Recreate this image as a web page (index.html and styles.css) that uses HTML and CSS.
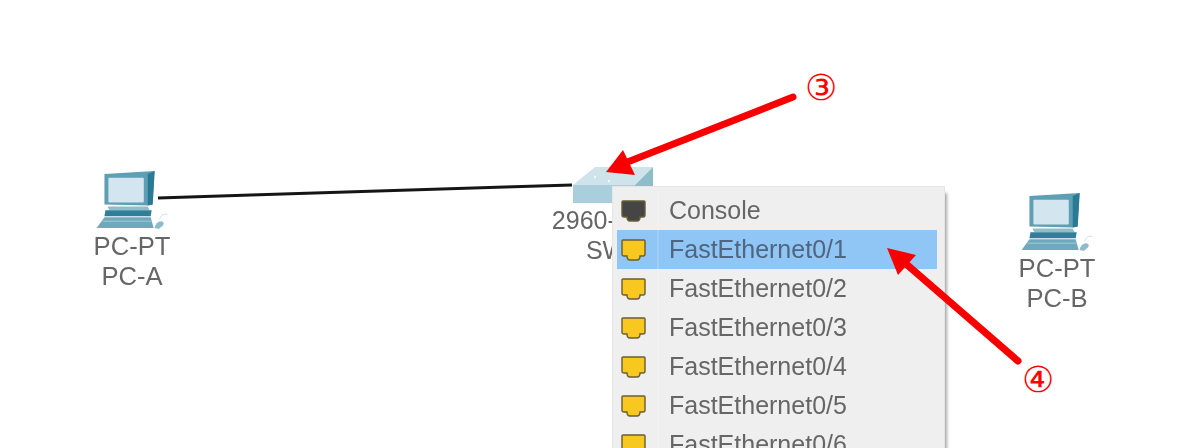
FILE: index.html
```html
<!DOCTYPE html>
<html lang="en">
<head>
    <meta charset="UTF-8">
    <meta name="viewport" content="width=device-width, initial-scale=1.0">
    <title>Packet Tracer</title>
    <link rel="stylesheet" href="styles.css">
</head>
<body>
    <svg class="defs" width="0" height="0">
        <symbol id="pc" viewBox="0 0 72 62">
            <path d="M8 4 L59 1 L57 35 L52 36 L8 35 Z" fill="#5f9fb5"/>
            <path d="M52 4 L59 1 L57 35 L52 36 Z" fill="#2a7a95"/>
            <rect x="12" y="8" width="36" height="25" rx="1" fill="#d3e5ee"/>
            <path d="M11 37 H52 L54 41 H13 Z" fill="#8fbdcc"/>
            <path d="M9 41 H56 L55 47 H8 Z" fill="#2f7f99"/>
            <path d="M8 48 H55 L58 59 H0 Z" fill="#6fa9bd"/>
            <path d="M6 52 H56" stroke="#a5cbd8" stroke-width="1"/>
            <path d="M59 59 Q60 52 66 52 Q70 53 67 57 L63 60 Z" fill="#8fbccb"/>
            <path d="M64 50 Q66 44 72 45" fill="none" stroke="#c5dde6" stroke-width="1"/>
        </symbol>
        <symbol id="port" viewBox="0 0 25 22">
            <path d="M2 1 H23 Q24 1 24 2 V15 Q24 17 22 17 H19 Q19 21 16 21 H9 Q6 21 6 17 H3 Q1 17 1 15 V2 Q1 1 2 1 Z" fill="currentColor" stroke="#6a5c34" stroke-width="1.4"/>
        </symbol>
    </svg>

    <div class="scene">
        <svg class="wires" width="1200" height="448">
            <line x1="158" y1="198" x2="572" y2="185" stroke="#151515" stroke-width="3"/>
        </svg>

        <div class="node pc-a">
            <svg class="pc-icon"><use href="#pc"/></svg>
            <div class="label">PC-PT</div>
            <div class="label">PC-A</div>
        </div>

        <div class="node sw">
            <svg class="sw-icon" viewBox="0 0 80 36">
                <path d="M0 18 L22 0 H80 L62 18 Z" fill="#cfe3ea"/>
                <rect x="0" y="18" width="62" height="18" fill="#a9cfdc"/>
                <path d="M62 18 L80 0 V20 L62 36 Z" fill="#8fbcc9"/>
                <circle cx="22" cy="10" r="1.2" fill="#f2f8fa"/>
                <circle cx="48" cy="5" r="1.2" fill="#f2f8fa"/>
                <circle cx="36" cy="14" r="1.2" fill="#f2f8fa"/>
            </svg>
            <div class="label sw-label">2960-24TT</div>
            <div class="label sw-label">SW1</div>
        </div>

        <div class="node pc-b">
            <svg class="pc-icon"><use href="#pc"/></svg>
            <div class="label">PC-PT</div>
            <div class="label">PC-B</div>
        </div>

        <ul class="menu">
            <li class="item console"><span class="cell"><svg class="port"><use href="#port"/></svg></span>Console</li>
            <li class="item active"><span class="cell"><svg class="port"><use href="#port"/></svg></span>FastEthernet0/1</li>
            <li class="item"><span class="cell"><svg class="port"><use href="#port"/></svg></span>FastEthernet0/2</li>
            <li class="item"><span class="cell"><svg class="port"><use href="#port"/></svg></span>FastEthernet0/3</li>
            <li class="item"><span class="cell"><svg class="port"><use href="#port"/></svg></span>FastEthernet0/4</li>
            <li class="item"><span class="cell"><svg class="port"><use href="#port"/></svg></span>FastEthernet0/5</li>
            <li class="item"><span class="cell"><svg class="port"><use href="#port"/></svg></span>FastEthernet0/6</li>
        </ul>
    </div>

    <svg class="notes" width="1200" height="448">
        <line x1="793" y1="97" x2="625" y2="163" stroke="#f80000" stroke-width="7" stroke-linecap="round"/>
        <polygon points="606,172 623,150 635,175" fill="#f80000"/>
        <line x1="1018" y1="361" x2="905" y2="263" stroke="#f80000" stroke-width="7" stroke-linecap="round"/>
        <polygon points="887,248 916,255 898,275" fill="#f80000"/>
    </svg>
    <div class="mark mark-3">③</div>
    <div class="mark mark-4">④</div>
</body>
</html>
```

FILE: styles.css
```css
*{
    padding: 0;
    margin: 0;
    box-sizing: border-box;
}
body{
    width: 1200px;
    height: 448px;
    overflow: hidden;
    position: relative;
    background: #fff;
    font-family: "Liberation Sans", Arial, sans-serif;
}
.defs{
    position: absolute;
}
/* the source picture is an upscaled capture, so it is a bit soft */
.scene{
    position: absolute;
    inset: 0;
    filter: blur(0.7px);
}
.wires, .notes{
    position: absolute;
    left: 0;
    top: 0;
}
.node{
    position: absolute;
    width: 160px;
    display: flex;
    flex-direction: column;
    align-items: center;
}
.pc-a{
    left: 52px;
    top: 170px;
}
.pc-b{
    left: 977px;
    top: 192px;
}
.sw{
    left: 533px;
    top: 167px;
}
.pc-icon{
    width: 72px;
    height: 61px;
}
.sw-icon{
    width: 80px;
    height: 36px;
    margin-bottom: 2px;
}
.label{
    font-size: 25.6px;
    line-height: 30px;
    color: #666;
    white-space: nowrap;
}
.sw-label{
    font-size: 25px;
}
.menu{
    position: absolute;
    left: 612px;
    top: 186px;
    width: 333px;
    padding: 4px 7px 0 4px;
    list-style: none;
    background: #efefef;
    border: 1px solid #e6e6e6;
    box-shadow: 3px 6px 3px -1px #a8a8a8;
}
.item{
    height: 39px;
    display: flex;
    align-items: center;
    font-size: 25px;
    color: #666;
    white-space: nowrap;
}
.item.active{
    background: #90c6f5;
    color: #4f6580;
}
.cell{
    width: 42px;
    height: 100%;
    margin-right: 10px;
    padding-left: 4px;
    display: flex;
    align-items: center;
    border-right: 2px solid rgba(255, 255, 255, 0.15);
}
.port{
    width: 25px;
    height: 22px;
    color: #f8c821;
}
.console .port{
    color: #454545;
}
.mark{
    position: absolute;
    font-family: "DejaVu Sans", sans-serif;
    font-size: 36px;
    line-height: 36px;
    color: #f00;
}
.mark-3{
    left: 805px;
    top: 70px;
}
.mark-4{
    left: 1022px;
    top: 362px;
}
```
